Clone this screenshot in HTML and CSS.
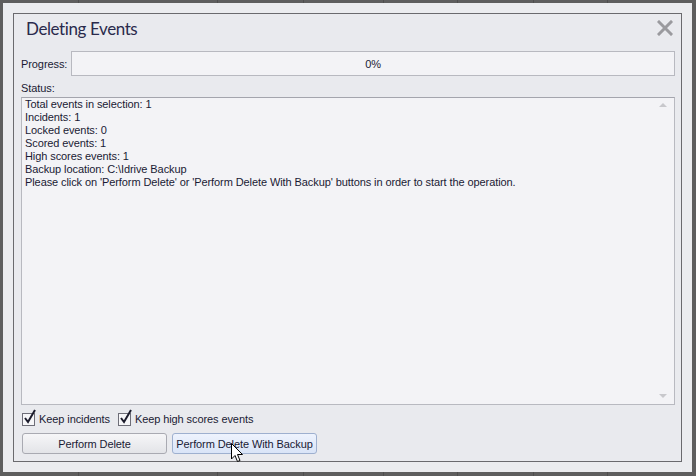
FILE: index.html
```html
<!DOCTYPE html>
<html lang="en">
<head>
    <meta charset="UTF-8">
    <title>Deleting Events</title>
    <link rel="stylesheet" href="styles.css">
</head>
<body>
    <!-- Backdrop grid lines -->
    <div class="backdrop">
        <span style="left:78px"></span><span style="left:217px"></span><span style="left:303px"></span>
        <span style="left:383px"></span><span style="left:457px"></span><span style="left:533px"></span>
        <span style="left:607px"></span>
    </div>

    <div class="dialog-frame">
        <div class="dialog">
            <div class="dialog-header">
                <h1 class="dialog-title">Deleting Events</h1>
                <svg class="close-btn" width="16" height="16" viewBox="0 0 16 16">
                    <path d="M2 2 L14 14 M14 2 L2 14" stroke="#9a9a9e" stroke-width="3" stroke-linecap="square"/>
                </svg>
            </div>

            <div class="progress-row">
                <span class="field-label">Progress:</span>
                <div class="progress-bar">0%</div>
            </div>

            <div class="status-label">Status:</div>
            <div class="status-box">
                <div class="status-text">
                    <div>Total events in selection: 1</div>
                    <div>Incidents: 1</div>
                    <div>Locked events: 0</div>
                    <div>Scored events: 1</div>
                    <div>High scores events: 1</div>
                    <div>Backup location: C:\Idrive Backup</div>
                    <div>Please click on 'Perform Delete' or 'Perform Delete With Backup' buttons in order to start the operation.</div>
                </div>
                <div class="scroll-arrow up"></div>
                <div class="scroll-arrow down"></div>
            </div>

            <div class="options-row">
                <label class="check">
                    <span class="check-box">
                        <svg width="14" height="16" viewBox="0 0 14 16"><path d="M2 9 L5 13 L12 1" stroke="#1c1c2c" stroke-width="2" fill="none"/></svg>
                    </span>
                    Keep incidents
                </label>
                <label class="check">
                    <span class="check-box">
                        <svg width="14" height="16" viewBox="0 0 14 16"><path d="M2 9 L5 13 L12 1" stroke="#1c1c2c" stroke-width="2" fill="none"/></svg>
                    </span>
                    Keep high scores events
                </label>
            </div>

            <div class="button-row">
                <button class="btn">Perform Delete</button>
                <button class="btn hover">Perform Delete With Backup</button>
            </div>
        </div>
    </div>

    <!-- Mouse pointer -->
    <svg class="cursor" width="13" height="20" viewBox="0 0 13 20">
        <path d="M0.5 0.5 L0.5 16 L4 12.5 L6.5 18.5 L9 17.5 L6.5 11.5 L11.5 11.5 Z" fill="#fff" stroke="#000" stroke-width="1"/>
    </svg>
</body>
</html>
```

FILE: styles.css
```css
:root {
    --panel-bg: #e9eaee;
    --field-bg: #f3f3f6;
    --text-color: #1a1a34;
}

body {
    margin: 0;
    width: 696px;
    height: 476px;
    background: #5e5e5e;
    font-family: "Liberation Sans", Arial, sans-serif;
    font-size: 11px;
    letter-spacing: -0.09px;
    color: var(--text-color);
    position: relative;
    overflow: hidden;
}

/* Backdrop */
.backdrop span {
    position: absolute;
    top: 0;
    width: 1px;
    height: 476px;
    background: #4e4e4e;
}

/* Dialog frame */
.dialog-frame {
    position: relative;
    margin: 3px;
    width: 669px;
    height: 449px;
    padding: 10px;
    background: #ebecef;
}

.dialog {
    height: 447px;
    border: 1px solid #6a6a6e;
    background: var(--panel-bg);
    padding: 0 6px 0 7px;
    display: flex;
    flex-direction: column;
}

.dialog-header {
    height: 37px;
    display: flex;
    align-items: flex-start;
    justify-content: space-between;
}

.dialog-title {
    margin: 4px 0 0 5px;
    font-family: Lato, sans-serif;
    font-weight: normal;
    font-size: 17px;
    letter-spacing: -0.4px;
    color: #2a2a4c;
}

.close-btn {
    margin: 6px 2px 0 0;
}

/* Progress */
.progress-row {
    height: 25px;
    display: flex;
    align-items: center;
    margin-bottom: 5px;
}

.field-label {
    width: 50px;
}

.progress-bar {
    flex: 1;
    height: 23px;
    border: 1px solid #b8b9c0;
    background: var(--field-bg);
    display: flex;
    align-items: center;
    justify-content: center;
}

.status-label {
    height: 16px;
    line-height: 15px;
}

/* Status box */
.status-box {
    position: relative;
    height: 306px;
    border: 1px solid #b8b9c0;
    border-top-color: #a4a5ad;
    background: var(--field-bg);
}

.status-text {
    padding: 0 0 0 3px;
    line-height: 13px;
}

.scroll-arrow {
    position: absolute;
    right: 7px;
    width: 0;
    height: 0;
    border-left: 4px solid transparent;
    border-right: 4px solid transparent;
}

.scroll-arrow.up {
    top: 5px;
    border-bottom: 4px solid #c8c8cc;
}

.scroll-arrow.down {
    bottom: 6px;
    border-top: 4px solid #c8c8cc;
}

/* Options */
.options-row {
    height: 28px;
    display: flex;
    align-items: center;
    gap: 8px;
    padding-left: 1px;
}

.check {
    display: flex;
    align-items: center;
    gap: 4px;
}

.check-box {
    position: relative;
    width: 11px;
    height: 11px;
    border: 1px solid #6e6e78;
    background: #f6f6f8;
}

.check-box svg {
    position: absolute;
    left: 0;
    top: -5px;
}

/* Buttons */
.button-row {
    display: flex;
    gap: 5px;
    padding-left: 1px;
}

.btn {
    width: 145px;
    height: 21px;
    font-family: "Liberation Sans", Arial, sans-serif;
    font-size: 11px;
    letter-spacing: -0.09px;
    color: var(--text-color);
    border: 1px solid #a9aab2;
    border-radius: 3px;
    background: linear-gradient(#f6f6f8, #e3e4e8);
    padding: 0;
}

.btn.hover {
    border-color: #9eb0cf;
    background: linear-gradient(#eef3fd, #d9e4f7);
}

.cursor {
    position: absolute;
    left: 231px;
    top: 443px;
}
```
